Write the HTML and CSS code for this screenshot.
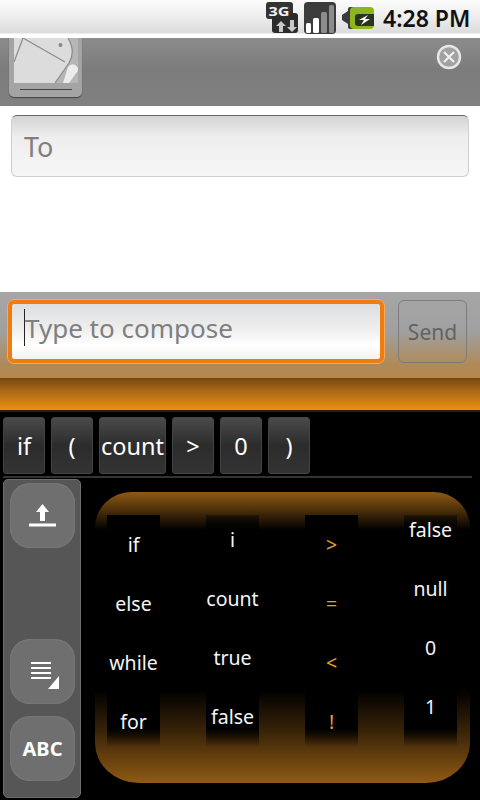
FILE: index.html
```html
<!DOCTYPE html>
<html>
<head>
  <meta charset="UTF-8">
  <meta name="viewport" content="width=device-width, initial-scale=1.0">
  <title>Compose</title>
  <link rel="stylesheet" href="styles.css">
</head>
<body>
  <div class="status-bar">
    <svg class="status-icon" width="32" height="32" viewBox="0 0 32 32">
      <rect x="0" y="0" width="27" height="17" rx="3" fill="#333"/>
      <rect x="6" y="11" width="26" height="20" rx="3" fill="#2b2b2b"/>
      <text class="net-label" x="2.500" y="14" textLength="21" lengthAdjust="spacingAndGlyphs">3G</text>
      <path d="M13 30v-6h-3l5-5 5 5h-3v6zM24 18v7h-3l5 5 5-5h-3v-7z" fill="#c8c8c8"/>
    </svg>
    <svg class="status-icon signal" width="32" height="32" viewBox="0 0 32 32">
      <rect x="0" y="0" width="32" height="32" rx="4" fill="#3c3c3c"/>
      <rect x="2" y="21" width="5" height="10" rx="1.500" fill="#fff"/>
      <rect x="9" y="16" width="6" height="15" rx="1.500" fill="#fff"/>
      <rect x="17" y="10" width="6" height="21" rx="1.500" fill="#8c8c8c"/>
      <rect x="25" y="3" width="5" height="28" rx="1.500" fill="#8c8c8c"/>
    </svg>
    <svg class="status-icon battery" width="32" height="24" viewBox="0 0 32 24">
      <path d="M0 9l6-4V3q0-2 2-2h4v22H8q-2 0-2-2v-3l-6-4z" fill="#3a3a3a"/>
      <rect x="8" y="1" width="24" height="22" rx="4" fill="#8cb51f"/>
      <path d="M13 11q0-3 3-3h16v12H16q-3 0-3-3z" fill="#2c3320"/>
      <path d="M26 9l-9 5h5l-3 5 9-6h-5l3-4z" fill="#fff"/>
    </svg>
    <span class="clock">4:28 PM</span>
  </div>

  <div class="attach-bar">
    <div class="thumb">
      <svg class="thumb-pic" width="64" height="45" viewBox="0 0 64 45">
        <rect width="64" height="45" fill="#dcdcdc"/>
        <path d="M54 0q8 14 1 25l-14 20h23V0z" fill="#b6b6b6"/>
        <path d="M0 24L9 0l42 24M54 0q8 14 1 25L41 45" fill="none" stroke="#8e8e8e" stroke-width="1.300"/>
        <path d="M54 29q3-4 7-2 5 3 2 7l-8 11h-6z" fill="#ececec"/>
        <circle cx="46.500" cy="7" r="2" fill="#888"/>
      </svg>
      <div class="thumb-line"></div>
    </div>
    <svg class="close-icon" width="26" height="26" viewBox="0 0 26 26">
      <circle cx="13" cy="13" r="11" fill="#a2a2a2" stroke="#e8e8e8" stroke-width="2.400"/>
      <path d="M8 8l10 10M18 8L8 18" stroke="#f0f0f0" stroke-width="2.200"/>
    </svg>
  </div>

  <div class="recipients">
    <div class="field to-field">To</div>
  </div>

  <div class="compose-bar">
    <div class="field compose-field"><span class="caret"></span>Type to compose</div>
    <div class="send-btn">Send</div>
  </div>
  <div class="orange-strip"></div>

  <div class="keyboard">
    <div class="chips">
      <div class="chip">if</div>
      <div class="chip">(</div>
      <div class="chip">count</div>
      <div class="chip">&gt;</div>
      <div class="chip">0</div>
      <div class="chip">)</div>
    </div>
    <div class="chip-rule"></div>
    <div class="kb-body">
      <div class="side-panel">
        <div class="side-btn">
          <svg width="27" height="23" viewBox="0 0 27 23"><path d="M13.500 0l6.500 8h-4v9h-5V8H7zM0 19.500h27v3H0z" fill="#fff"/></svg>
        </div>
        <div class="side-gap"></div>
        <div class="side-btn">
          <svg class="menu-icon" width="28" height="27" viewBox="0 0 28 27"><path d="M0 0h20v2H0zM0 5h20v2H0zM0 10h20v2H0zM0 15h20v2H0z" fill="#fff"/><path d="M28 14v13H17z" fill="#fff"/></svg>
        </div>
        <div class="side-btn abc">ABC</div>
      </div>
      <div class="key-panel">
        <div class="key-col">
          <div class="key">if</div>
          <div class="key">else</div>
          <div class="key">while</div>
          <div class="key">for</div>
        </div>
        <div class="key-col col-vars">
          <div class="key">i</div>
          <div class="key">count</div>
          <div class="key">true</div>
          <div class="key">false</div>
        </div>
        <div class="key-col col-ops">
          <div class="key">&gt;</div>
          <div class="key">=</div>
          <div class="key">&lt;</div>
          <div class="key">!</div>
        </div>
        <div class="key-col col-vals">
          <div class="key">false</div>
          <div class="key">null</div>
          <div class="key">0</div>
          <div class="key">1</div>
        </div>
      </div>
    </div>
  </div>
</body>
</html>
```

FILE: styles.css
```css
html, body {
  margin: 0;
  padding: 0;
}
body {
  width: 480px;
  height: 800px;
  overflow: hidden;
  background-color: #000;
  font-family: "Noto Sans", "Open Sans", sans-serif;
}

.status-bar {
  height: 38px;
  box-sizing: border-box;
  display: flex;
  align-items: center;
  padding: 0 10px 2px 266px;
  background: linear-gradient(#fbfbfb 0, #f2f2f2 12px, #dcdcdc 33px, #fff 34px);
}
.status-icon {
  flex: none;
}
.net-label {
  font-family: "Noto Sans", sans-serif;
  font-size: 13px;
  font-weight: 700;
  fill: #f2f2f2;
}
.signal {
  margin-left: 6px;
}
.battery {
  margin-left: 6px;
}
.clock {
  margin-left: 9px;
  font-size: 23px;
  font-weight: 600;
  color: #111;
  white-space: nowrap;
}

.attach-bar {
  height: 68px;
  box-sizing: border-box;
  display: flex;
  justify-content: space-between;
  padding: 0 18px 0 9px;
  overflow: hidden;
  background: linear-gradient(#8c8c8c, #7c7c7c 45%, #808080);
}
.thumb {
  width: 73px;
  height: 59px;
  box-sizing: border-box;
  padding: 0 4px 0 5px;
  background-color: #a4a4a4;
  border-radius: 0 0 5px 5px;
  box-shadow: 0 1px 1px #444;
}
.thumb-pic {
  display: block;
}
.thumb-line {
  height: 1px;
  margin: 6px 6px 0 6px;
  background-color: #444;
}
.close-icon {
  margin-top: 6px;
}

.recipients {
  height: 186px;
  box-sizing: border-box;
  padding: 9px 11px 0;
  background-color: #fff;
}
.field {
  box-sizing: border-box;
  display: flex;
  align-items: center;
  border-radius: 6px;
  color: #7f7f7f;
}
.to-field {
  height: 62px;
  padding-left: 12px;
  font-size: 27px;
  border: 1px solid #d0d0d0;
  border-top: 1px solid #666;
  background: linear-gradient(#d4d4d4, #eeeeee 35%, #f6f6f6);
}

.compose-bar {
  height: 86px;
  box-sizing: border-box;
  display: flex;
  align-items: flex-start;
  padding: 8px 13px 0 8px;
  background: linear-gradient(#a6a6a6, #a0a0a0 45%, #b08a58 85%, #b48850);
}
.compose-field {
  position: relative;
  width: 376px;
  height: 63px;
  padding: 0 0 8px 13px;
  font-size: 26px;
  border: 4px solid #f07c10;
  outline: 1px solid #f7ab5a;
  background: linear-gradient(#dcdedf, #eeeeee 45%, #ffffff 75%, #f6f2ec);
}
.caret {
  position: absolute;
  left: 12px;
  top: 5px;
  width: 1px;
  height: 37px;
  background-color: #222;
}
.send-btn {
  width: 69px;
  height: 63px;
  box-sizing: border-box;
  margin-left: 14px;
  display: flex;
  align-items: center;
  justify-content: center;
  font-size: 21px;
  color: #585858;
  border: 1px solid #777;
  border-radius: 6px;
  opacity: 0.85;
}
.orange-strip {
  height: 32px;
  background: linear-gradient(#75480f, #a8691a 40%, #ee8f10);
}

.keyboard {
  height: 390px;
  border-top: 2px solid #2a1c14;
  box-sizing: border-box;
  background-color: #000;
}
.chips {
  display: flex;
  gap: 6px;
  padding: 5px 0 0 3px;
}
.chip {
  width: 42px;
  height: 57px;
  box-sizing: border-box;
  display: flex;
  align-items: center;
  justify-content: center;
  font-size: 23.500px;
  color: #fff;
  border: 1px solid #444;
  border-radius: 3px;
  background: linear-gradient(#4a4a4a, #2c2c2c 50%, #333);
}
.chip:nth-child(3) {
  width: 67px;
}
.chip-rule {
  height: 2px;
  margin: 2px 8px 0 3px;
  background-color: #333;
}
.kb-body {
  display: flex;
  padding: 1px 10px 0 3px;
}
.side-panel {
  width: 78px;
  height: 319px;
  box-sizing: border-box;
  display: flex;
  flex-direction: column;
  gap: 12px;
  padding: 3px 5px 0 6px;
  border-radius: 5px;
  background-color: #565656;
  border: 1px solid #6e6e6e;
}
.side-btn {
  height: 65px;
  flex: none;
  display: flex;
  align-items: center;
  justify-content: center;
  border-radius: 20px;
  background-color: #6f6f6f;
  box-shadow: inset 0 0 2px #8a8a8a;
}
.side-gap {
  height: 67px;
  flex: none;
}
.menu-icon {
  margin: 7px 0 0 4px;
}
.abc {
  font-size: 20px;
  font-weight: 700;
  color: #fff;
}

.key-panel {
  width: 375px;
  height: 291px;
  box-sizing: border-box;
  margin: 13px 0 0 14px;
  display: flex;
  justify-content: space-between;
  padding: 23px 13px 0 12px;
  border-radius: 36px 36px 44px 44px / 36px 36px 40px 40px;
  background: linear-gradient(#8f5a14 0, #000 38px, #000 198px, #3a2408 240px, #8f5a14 291px);
}
.key-col {
  width: 53px;
  height: 232px;
  background: linear-gradient(#000 92%, rgba(0, 0, 0, 0));
}
.col-vars, .col-vals {
  background: linear-gradient(rgba(0, 0, 0, 0.4), #000 7%, #000 92%, rgba(0, 0, 0, 0));
}
.key {
  height: 59px;
  display: flex;
  align-items: center;
  justify-content: center;
  font-size: 19.500px;
  color: #f4f4f4;
}
.col-vars .key:first-child {
  margin-top: -5px;
}
.col-vals .key:first-child {
  margin-top: -15px;
}
.col-ops .key {
  color: #e8a02c;
}
```
